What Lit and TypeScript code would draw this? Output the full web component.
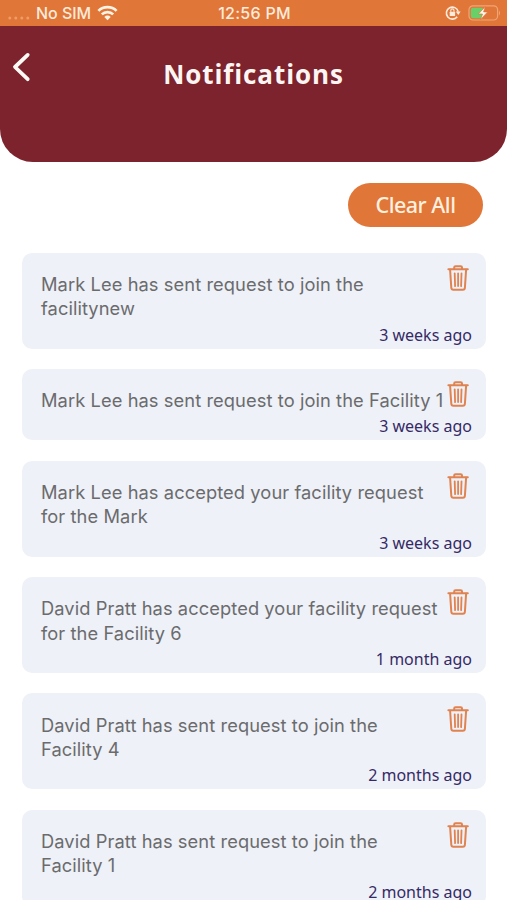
import { LitElement, html, svg, css } from "lit";
import { customElement, property } from "lit/decorators.js";

interface Notice {
  lines: string[];
  time: string;
}

const NOTICES: Notice[] = [
  { lines: ["Mark Lee has sent request to join the", "facilitynew"], time: "3 weeks ago" },
  { lines: ["Mark Lee has sent request to join the Facility 1"], time: "3 weeks ago" },
  { lines: ["Mark Lee has accepted your facility request", "for the Mark"], time: "3 weeks ago" },
  { lines: ["David Pratt has accepted your facility request", "for the Facility 6"], time: "1 month ago" },
  { lines: ["David Pratt has sent request to join the", "Facility 4"], time: "2 months ago" },
  { lines: ["David Pratt has sent request to join the", "Facility 1"], time: "2 months ago" },
];

@customElement("status-bar")
class StatusBar extends LitElement {
  static styles = css`
    :host {
      display: grid;
      grid-template-columns: 1fr auto 1fr;
      align-items: center;
      height: 26px;
      box-sizing: border-box;
      padding: 0 6px 0 8px;
      background: #e17639;
      color: #fdebdb;
      font: 500 16px/26px Inter, "Liberation Sans", sans-serif;
    }
    .left, .right { display: flex; align-items: center; }
    .right { justify-content: flex-end; gap: 7px; }
    .dots { margin-right: 5px; }
    .wifi { margin-left: 6px; }
    .carrier { letter-spacing: -0.05px; }
    .carrier, .clock { padding-top: 1px; line-height: 25px; }
    .clock { letter-spacing: 0.28px; }
    svg { display: block; }
  `;

  render() {
    return html`
      <div class="left">
        <svg class="dots" width="23" height="26" viewBox="0 0 23 26" fill="#ee9c68">
          ${[1.8, 7.8, 13.8, 19.8].map((x) => svg`<circle cx=${x} cy="18" r="1.5" />`)}
        </svg>
        <span class="carrier">No SIM</span>
        <svg class="wifi" width="21" height="16" viewBox="0 0 21 16" fill="none" stroke="#fff3e6" stroke-width="2.7">
          <path d="M1.4 5.9a13 13 0 0 1 18.2 0" />
          <path d="M4.8 9.4a8.2 8.2 0 0 1 11.4 0" />
          <path d="M10.5 15.2l-3.2-3.3a4.6 4.6 0 0 1 6.4 0z" fill="#fff3e6" stroke="none" />
        </svg>
      </div>
      <span class="clock">12:56 PM</span>
      <div class="right">
        <svg width="16" height="16" viewBox="0 0 16 16" fill="none" stroke="#fdebdb">
          <path d="M12.2 11.7A6 6 0 1 1 13.2 6.6" stroke-width="1.6" />
          <path d="M10.8 6.6h4.8l-2.3 3.3z" fill="#fdebdb" stroke="none" />
          <rect x="4.7" y="6.7" width="5.4" height="4.3" rx=".6" fill="#fdebdb" stroke="none" />
          <path d="M5.8 6.8V5.5a1.6 1.6 0 0 1 3.2 0v1.3" stroke-width="1.1" />
        </svg>
        <svg width="33" height="16" viewBox="0 0 33 16">
          <rect x="1" y=".8" width="28.6" height="14.2" rx="4" fill="none" stroke="#f0a577" stroke-width="1.2" />
          <path d="M31 5.4q2 2.5 0 5z" fill="#f0a577" />
          <path d="M5 2.7h9.8v10.5H5a2.2 2.2 0 0 1-2.2-2.2V4.9A2.2 2.2 0 0 1 5 2.7z" fill="#68cf69" />
          <path d="M17.3 1.5L10.4 9h4.1l-2 5.7 7.1-7.8h-4z" fill="#fff8ee" stroke="#e17639" stroke-width=".7" />
        </svg>
      </div>
    `;
  }
}

@customElement("notice-card")
class NoticeCard extends LitElement {
  @property({ attribute: false }) notice!: Notice;

  static styles = css`
    :host {
      display: block;
      box-sizing: border-box;
      padding: 19.3px 14px 0 19px;
      border-radius: 10px;
      background: #eef1f7;
    }
    .row { display: flex; justify-content: space-between; height: var(--h); }
    .message {
      flex: 1;
      white-space: nowrap;
      color: #6b6b6e;
      font: 400 18.3px/24.4px Inter, "Liberation Sans", sans-serif;
      letter-spacing: 0.08px;
    }
    .bin { flex: none; display: block; margin: -8px 2px 0 0; height: 28px; }
    .foot { display: flex; justify-content: flex-end; height: 28px; }
    .time {
      color: #352a66;
      font: 400 16px/28px "Noto Sans", "Open Sans", sans-serif;
    }
  `;

  render() {
    const { lines, time } = this.notice;
    return html`
      <div class="row" style="--h:${lines.length * 24.4}px">
        <div class="message">${lines.map((line) => html`<div>${line}</div>`)}</div>
        <svg class="bin" width="24" height="28" viewBox="0 0 24 28" fill="none" stroke="#e08350" stroke-width="2" stroke-linecap="round" stroke-linejoin="round">
          <path d="M2.4 5.2h19.4" />
          <path d="M8.2 4.8V3.4q0-1.2 1.3-1.2h5.2q1.3 0 1.3 1.2v1.4" />
          <path d="M4.1 5.8l1.2 18q.1 2 2 2h9.6q1.9 0 2-2l1.2-18" />
          <path d="M8.7 9.3l.4 12.8M12.1 9.3v12.8M15.5 9.3l-.4 12.8" stroke-width="1.8" />
        </svg>
      </div>
      <div class="foot"><span class="time">${time}</span></div>
    `;
  }
}

@customElement("app-root")
class AppRoot extends LitElement {
  static styles = css`
    :host {
      display: block;
      height: 900px;
      overflow: hidden;
      background: #fff;
    }
    .header {
      display: grid;
      grid-template-columns: 40px 1fr 40px;
      align-items: start;
      height: 136px;
      border-radius: 0 0 33px 33px;
      background: #7c232d;
    }
    .back { display: block; margin: 25px 0 0 11px; }
    .title {
      margin: 29px 0 0;
      text-align: center;
      color: #fff6f3;
      font: 700 26px/38px "Open Sans", "Noto Sans", sans-serif;
      letter-spacing: 0.9px;
      font-variant-ligatures: none;
    }
    .actions { display: flex; justify-content: flex-end; padding: 21px 24px 0 0; }
    .clear {
      width: 135px;
      height: 44px;
      padding: 0;
      border: 0;
      border-radius: 22px;
      background: #e17639;
      color: #fff0df;
      font: 500 21.5px/44px "Noto Sans", "Open Sans", sans-serif;
      letter-spacing: -0.5px;
    }
    .list {
      display: flex;
      flex-direction: column;
      gap: 20.2px;
      padding: 25.5px 21px 0 22px;
    }
  `;

  render() {
    return html`
      <status-bar></status-bar>
      <header class="header">
        <svg class="back" width="20" height="32" viewBox="0 0 20 32" fill="none" stroke="#fffaf5" stroke-width="3.8" stroke-linecap="round" stroke-linejoin="round">
          <path d="M16.7 3.9L4 16l12.7 12.2" />
        </svg>
        <h1 class="title">Notifications</h1>
      </header>
      <div class="actions"><button class="clear">Clear All</button></div>
      <main class="list">
        ${NOTICES.map((notice) => html`<notice-card .notice=${notice}></notice-card>`)}
      </main>
    `;
  }
}
